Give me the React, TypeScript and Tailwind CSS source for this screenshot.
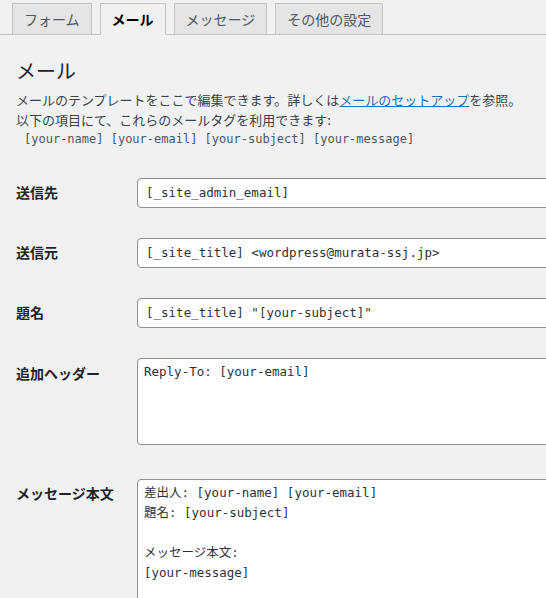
import React from 'react';

const TABS = ['フォーム', 'メール', 'メッセージ', 'その他の設定'];
const ACTIVE = 'メール';

const MONO = "font-['DejaVu_Sans_Mono','Noto_Sans_CJK_JP',monospace]";

const BODY = `差出人: [your-name] [your-email]
題名: [your-subject]

メッセージ本文:
[your-message]`;

function Label({ children, pt = 'pt-[4px]' }: { children: React.ReactNode; pt?: string }) {
  return (
    <div className={`w-[121px] shrink-0 ${pt} text-[14px] leading-[20px] font-bold text-[#1d2327]`}>
      {children}
    </div>
  );
}

function TextInput({ value }: { value: string }) {
  return (
    <div
      className={`w-[440px] h-[30px] shrink-0 flex items-center bg-white border border-[#8c8f94] rounded-[4px] px-[8px] text-[12.5px] text-[#2c3338] ${MONO}`}
    >
      {value}
    </div>
  );
}

function TextArea({ value, height }: { value: string; height: string }) {
  return (
    <div
      className={`w-[440px] ${height} shrink-0 bg-white border border-[#8c8f94] rounded-[4px] px-[6px] pt-[3px] text-[12.5px] leading-[20px] text-[#2c3338] whitespace-pre ${MONO}`}
    >
      {value}
    </div>
  );
}

export default function App() {
  return (
    <div className="w-[546px] h-[598px] overflow-hidden bg-[#f1f1f1] font-['Noto_Sans_CJK_JP',sans-serif]">
      <div className="flex items-end gap-[8px] pl-[12px] pt-[3px] border-b border-[#c3c4c7]">
        {TABS.map((t) => (
          <div
            key={t}
            className={`h-[32px] px-[11px] flex items-center text-[14px] border border-[#c3c4c7] -mb-px ${
              t === ACTIVE
                ? 'bg-[#f1f1f1] border-b-[#f1f1f1] font-bold text-black'
                : 'bg-[#e5e5e5] text-[#50575e]'
            }`}
          >
            {t}
          </div>
        ))}
      </div>

      <div className="pl-[16px]">
        <h2 className="mt-[24px] text-[20px] leading-[24px] text-[#1d2327]">メール</h2>
        <p className="mt-[7px] text-[13px] leading-[20px] text-[#3c434a]">
          メールのテンプレートをここで編集できます。詳しくは
          <span className="text-[#2271b1] underline">メールのセットアップ</span>
          を参照。
          <br />
          以下の項目にて、これらのメールタグを利用できます:
        </p>
        <div className={`pl-[8px] text-[12px] leading-[18px] text-[#50575e] ${MONO}`}>
          [your-name] [your-email] [your-subject] [your-message]
        </div>

        <div className="mt-[30px] flex flex-col">
          <div className="flex items-start">
            <Label>送信先</Label>
            <TextInput value="[_site_admin_email]" />
          </div>
          <div className="flex items-start mt-[30px]">
            <Label>送信元</Label>
            <TextInput value="[_site_title] <wordpress@murata-ssj.jp>" />
          </div>
          <div className="flex items-start mt-[30px]">
            <Label>題名</Label>
            <TextInput value={'[_site_title] "[your-subject]"'} />
          </div>
          <div className="flex items-start mt-[30px]">
            <Label pt="pt-[5px]">追加ヘッダー</Label>
            <TextArea value="Reply-To: [your-email]" height="h-[87px]" />
          </div>
          <div className="flex items-start mt-[34px]">
            <Label>メッセージ本文</Label>
            <TextArea value={BODY} height="h-[200px]" />
          </div>
        </div>
      </div>
    </div>
  );
}
